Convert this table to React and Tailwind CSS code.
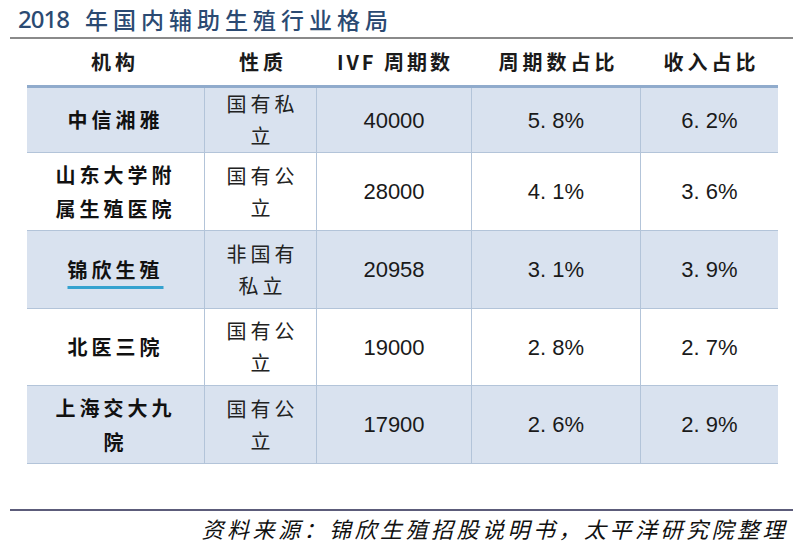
import React from "react";

const rows = [
  { name: ["中信湘雅"], nature: ["国有私", "立"], ivf: "40000", p1: "5. 8%", p2: "6. 2%", shade: true, h: "h-[68px]", top: true },
  { name: ["山东大学附", "属生殖医院"], nature: ["国有公", "立"], ivf: "28000", p1: "4. 1%", p2: "3. 6%", shade: false, h: "h-[78px]" },
  { name: ["锦欣生殖"], nature: ["非国有", "私立"], ivf: "20958", p1: "3. 1%", p2: "3. 9%", shade: true, h: "h-[78px]", underline: true },
  { name: ["北医三院"], nature: ["国有公", "立"], ivf: "19000", p1: "2. 8%", p2: "2. 7%", shade: false, h: "h-[77px]" },
  { name: ["上海交大九", "院"], nature: ["国有公", "立"], ivf: "17900", p1: "2. 6%", p2: "2. 9%", shade: true, h: "h-[78px]" },
];

const cjk = { fontFamily: '"Noto Sans CJK SC", "Noto Sans", sans-serif' };
const num = { fontFamily: '"Liberation Sans", Arial, sans-serif' };

export default function App() {
  return (
    <div className="w-[800px] h-[551px] bg-white overflow-hidden flex flex-col" style={cjk}>
      {/* Title */}
      <div className="h-[37px] pl-[18px] pt-[1px] flex items-center text-[23px] leading-none font-medium text-[#2b4a72]">
        <span className="tracking-[-1px] text-[24px]" style={{ fontFamily: '"Noto Sans", "Liberation Sans", sans-serif' }}>2018</span>
        <span className="ml-[16px] tracking-[5px]">年国内辅助生殖行业格局</span>
      </div>
      <div className="ml-[10px] w-[783px] h-[2px] bg-[#8a8a8a]" />

      {/* Header */}
      <div className="ml-[27px] w-[751px] h-[46px] grid grid-cols-[178px_112px_155px_169px_137px] items-center text-[20px] font-bold text-[#1a1a1a] leading-none">
        <div className="text-center tracking-[4px] pl-[4px] -ml-[6px]">机构</div>
        <div className="text-center tracking-[4px] pl-[4px]">性质</div>
        <div className="text-center tracking-[3px] pl-[3px] -ml-[2px]">IVF 周期数</div>
        <div className="text-center tracking-[4px] pl-[4px]">周期数占比</div>
        <div className="text-center tracking-[4px] pl-[4px]">收入占比</div>
      </div>

      {/* Body */}
      <div className="ml-[27px] w-[751px] flex flex-col border-t-[3px] border-[#90abcc]">
        {rows.map((r, i) => (
          <div
            key={i}
            className={`grid grid-cols-[178px_112px_155px_169px_137px] border-b border-[#b3c4d9] ${r.shade ? "bg-[#d9e2ef]" : "bg-white"} ${i === 0 ? "h-[65px]" : r.h}`}
          >
            <div className="border-r border-[#b3c4d9] flex flex-col items-center justify-center text-[20px] font-bold text-[#111] leading-[34px] -ml-[4px]">
              {r.name.map((t, k) => (
                <span
                  key={k}
                  className={`tracking-[4px] pl-[4px] ${r.underline ? "underline decoration-[#35a2cf] decoration-[3px] underline-offset-[8px]" : ""}`}
                >
                  {t}
                </span>
              ))}
            </div>
            <div className="border-r border-[#b3c4d9] flex flex-col items-center justify-center text-[20px] text-[#222] leading-[32px]">
              {r.nature.map((t, k) => (
                <span key={k} className="tracking-[4px] pl-[4px]">{t}</span>
              ))}
            </div>
            <div className="border-r border-[#b3c4d9] flex items-center justify-center text-[22px] text-[#1a1a1a]" style={num}>
              {r.ivf}
            </div>
            <div className="border-r border-[#b3c4d9] flex items-center justify-center text-[22px] text-[#1a1a1a]" style={num}>
              {r.p1}
            </div>
            <div className="flex items-center justify-center text-[22px] text-[#1a1a1a]" style={num}>
              {r.p2}
            </div>
          </div>
        ))}
      </div>

      {/* Footer */}
      <div className="mt-[45px] ml-[10px] w-[783px] h-[2px] bg-[#5c5c7a]" />
      <div className="flex justify-end pr-[12px] pt-[4px]">
        <span className="italic text-[22px] leading-[26px] tracking-[3.5px] text-[#111]">
          资料来源：锦欣生殖招股说明书，太平洋研究院整理
        </span>
      </div>
    </div>
  );
}
